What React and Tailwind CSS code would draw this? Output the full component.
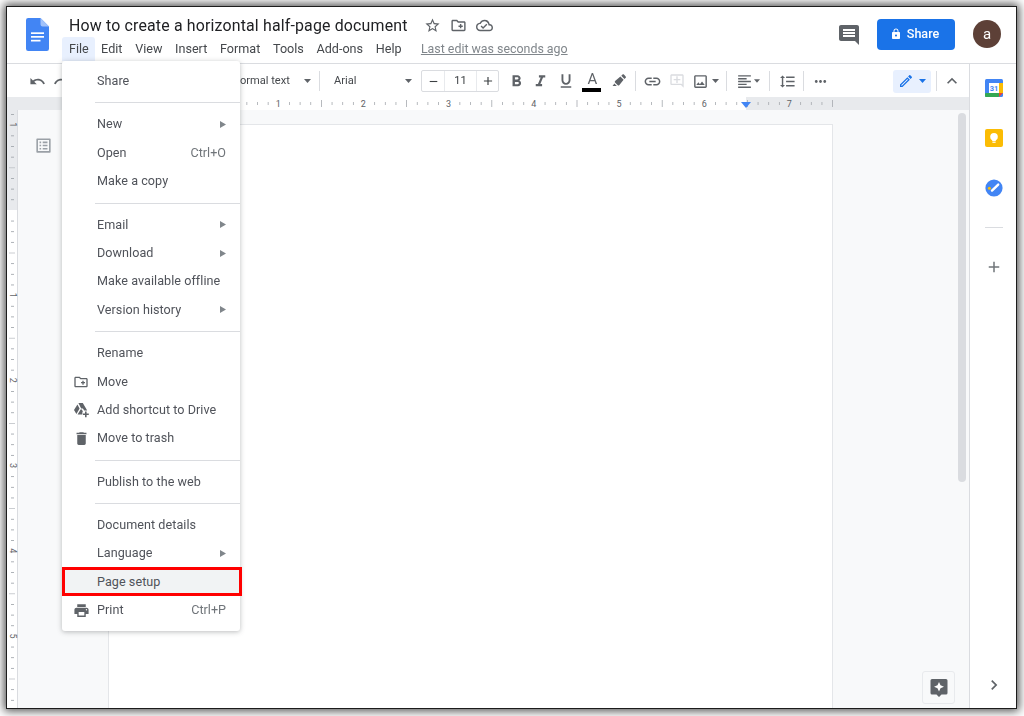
import React from "react";
import {
  MdUndo, MdRedo, MdStarBorder, MdOutlineCreateNewFolder, MdOutlineCloudDone, MdLock, MdFormatBold, MdFormatItalic,
  MdFormatUnderlined, MdLink, MdOutlineAddComment, MdOutlineImage, MdFormatAlignLeft, MdFormatLineSpacing,
  MdMoreHoriz, MdOutlineEdit, MdExpandLess, MdAdd, MdRemove, MdChevronRight, MdOutlineListAlt, MdDelete, MdPrint,
  MdInsertComment,
} from "react-icons/md";

const Sep = () => <div className="w-px h-[20px] bg-[#dadce0] shrink-0" />;

function Cell({ w, children, className = "" }) {
  return (
    <div style={{ width: w }} className={"h-full flex items-center justify-center shrink-0 text-[#5f6368] " + className}>
      {children}
    </div>
  );
}

const SubArrow = () => (
  <svg width="6" height="7" viewBox="0 0 6 7" className="mr-[14px]"><polygon points="0,0 6,3.5 0,7" fill="#80868b" /></svg>
);

function MenuItem({ label, icon, arrow, shortcut, active }) {
  return (
    <div className={"relative h-[28.4px] flex items-center text-[12.6px] text-[#50535a] " + (active ? "bg-[#f1f3f4]" : "")}>
      <div className="w-[35px] pl-[11px] flex justify-start text-[#5f6368]">{icon}</div>
      <div className="flex-1 tracking-[0.05px] pt-[0.5px]">{label}</div>
      {shortcut && <div className="pr-[14px] text-[#70757a]">{shortcut}</div>}
      {arrow && <SubArrow />}
      {active && <div className="absolute left-0 top-[-0.5px] w-[180px] h-[29px] border-[3px] border-[#f00]" />}
    </div>
  );
}

const MenuSep = () => (
  <div className="h-[15px] flex items-center pl-[33px]">
    <div className="h-px w-full bg-[#dadce0]" />
  </div>
);

function HRuler() {
  const ticks = [];
  for (let i = 0; i <= 68; i++) {
    const x = 101 + i * 10.65;
    const n = i % 8;
    if (n === 0) continue;
    ticks.push(
      <rect key={i} x={x} y={n === 4 ? 3 : 5} width="0.8" height={n === 4 ? 7 : 3} fill="#a5a9ae" />
    );
  }
  const nums = [1, 2, 3, 4, 5, 6, 7];
  return (
    <svg width="962" height="13" className="block">
      <rect x="0" y="0" width="962" height="13" fill="#e8eaed" />
      <rect x="186" y="0" width="553" height="13" fill="#ffffff" />
      {ticks}
      {nums.map((n) => (
        <text key={n} x={186 + n * 85.2} y="10" fontSize="9" textAnchor="middle" fill="#5f6368" fontFamily="Roboto, sans-serif">
          {n}
        </text>
      ))}
      <polygon points="734,5 744,5 739,11" fill="#4285f4" />
    </svg>
  );
}

function VRuler() {
  const ticks = [];
  const y0 = 100;
  for (let i = -10; i <= 48; i++) {
    const y = y0 + i * 10.65;
    const n = ((i % 8) + 8) % 8;
    if (n === 0) continue;
    ticks.push(<rect key={i} x={n === 4 ? 2 : 4} y={y} width={n === 4 ? 6 : 3} height="0.8" fill={n === 4 ? "#bdc1c6" : "#9aa0a6"} />);
  }
  const nums = [[-1, "1"], [1, "1"], [2, "2"], [3, "3"], [4, "4"], [5, "5"]];
  return (
    <svg width="11" height="598" className="block shrink-0">
      <rect width="11" height="598" fill="#ffffff" />
      <rect width="11" height="100" fill="#e8eaed" />
      <rect x="10" width="1" height="598" fill="#dadce0" />
      {ticks}
      {nums.map(([n, t]) => {
        const y = y0 + n * 85.2;
        return (
          <text key={n} x="5.5" y={y + 3} fontSize="9" textAnchor="middle" fill="#5f6368" fontFamily="Roboto, sans-serif" transform={`rotate(90 5.5 ${y})`}>
            {t}
          </text>
        );
      })}
    </svg>
  );
}

const DocsLogo = () => (
  <svg width="23" height="33" viewBox="0 0 23 33" className="shrink-0">
    <path d="M2.2 0H14.5L23 8.5V30.8A2.2 2.2 0 0 1 20.8 33H2.2A2.2 2.2 0 0 1 0 30.8V2.2A2.2 2.2 0 0 1 2.2 0Z" fill="#4285f4" />
    <path d="M14.5 0L23 8.5H16.6A2.1 2.1 0 0 1 14.5 6.4Z" fill="#a1c2fa" />
    <rect x="5" y="14.3" width="13" height="1.7" fill="#fff" />
    <rect x="5" y="18" width="13" height="1.7" fill="#fff" />
    <rect x="5" y="21.8" width="9.5" height="1.7" fill="#fff" />
  </svg>
);

const Calendar = () => (
  <svg width="18" height="18" viewBox="0 0 18 18">
    <rect x="0" y="0" width="18" height="18" rx="1.5" fill="#4285f4" />
    <rect x="4" y="4" width="10" height="10" fill="#fff" />
    <rect x="14" y="4" width="4" height="10" fill="#fbbc04" />
    <rect x="0" y="14" width="14" height="4" rx="1" fill="#34a853" />
    <polygon points="14,14 18,14 14,18" fill="#ea4335" />
    <text x="9" y="12" fontSize="7.5" fontWeight="700" textAnchor="middle" fill="#4285f4" fontFamily="Roboto, sans-serif">31</text>
  </svg>
);

const Keep = () => (
  <svg width="18" height="18" viewBox="0 0 18 18">
    <rect width="18" height="18" rx="2" fill="#fbbc04" />
    <circle cx="9" cy="7.8" r="3.8" fill="#fff" />
    <rect x="7.2" y="10" width="3.6" height="2" fill="#fff" />
    <rect x="7.4" y="12.6" width="3.2" height="1.2" fill="#fff" />
  </svg>
);

const Tasks = () => (
  <svg width="18" height="18" viewBox="0 0 18 18">
    <circle cx="9" cy="9" r="8.6" fill="#4285f4" />
    <path d="M7 11.6L13.2 5.6" stroke="#fff" strokeWidth="2.4" strokeLinecap="round" />
    <circle cx="4.4" cy="9.2" r="1.5" fill="#fbbc04" />
  </svg>
);

const Highlight = () => (
  <svg width="16" height="16" viewBox="0 0 16 16" fill="#5f6368">
    <path d="M9.4 3.6L12.6 6.8L8.2 12.2C7.8 12.7 7.2 12.7 6.8 12.3L4 9.5C3.6 9.1 3.7 8.5 4.1 8.1Z" />
    <path d="M10.3 2.8L11.5 1.6C11.9 1.2 12.5 1.2 12.9 1.6L14.7 3.4C15.1 3.8 15.1 4.4 14.7 4.8L13.5 6Z" />
    <path d="M3.4 10.6L5.8 13H1.6Z" />
  </svg>
);

const DrivePlus = () => (
  <svg width="17" height="16" viewBox="0 0 17 16" fill="#5f6368">
    <path d="M5.4 1H9.8L14.2 8.6H11.2L9.9 6.4H8.2Z" />
    <path d="M4.4 2.6L6.6 6.4L3.4 12L1 8Z" />
    <path d="M7.6 7.6H8.8L10 9.7H9.4V12.4H4.6Z" />
    <path d="M12 9.4H13.6V11.4H15.8V13H13.6V15.2H12V13H10V11.4H12Z" />
  </svg>
);

const Spark = () => (
  <svg width="18" height="20" viewBox="0 0 18 20">
    <path d="M2 1H16A1.5 1.5 0 0 1 17.5 2.5V15A1.5 1.5 0 0 1 16 16.5H11.5L9 19L6.5 16.5H2A1.5 1.5 0 0 1 .5 15V2.5A1.5 1.5 0 0 1 2 1Z" fill="#5f6368" />
    <path d="M9 4L10.5 7.3L14 8.8L10.5 10.3L9 13.6L7.5 10.3L4 8.8L7.5 7.3Z" fill="#fff" />
  </svg>
);

const Caret = ({ c = "#5f6368" }) => (
  <svg width="7" height="4" viewBox="0 0 7 4"><polygon points="0,0 7,0 3.5,4" fill={c} /></svg>
);

export default function App() {
  const menuBar = ["Edit", "View", "Insert", "Format", "Tools", "Add-ons", "Help"];
  return (
    <div className="w-[1024px] h-[716px] overflow-hidden bg-white pl-[6px] pt-[6px] [font-family:Roboto,Arial,sans-serif]">
      <div className="relative w-[1011px] h-[703px] border border-[#1c1c1c] bg-white flex flex-col blur-[0.3px] shadow-[0_0_9px_2px_rgba(0,0,0,0.7)]">
        {/* Header */}
        <div className="h-[57px] shrink-0 border-b border-[#dadce0] flex pl-[19px]">
          <div className="pt-[11px]"><DocsLogo /></div>
          <div className="ml-[13px] flex-1 flex flex-col">
            <div className="h-[30px] pt-[7px] pl-[7px] flex items-center">
              <div className="text-[15.9px] text-[#202124] tracking-[0.17px] leading-[20px]">How to create a horizontal half-page document</div>
              <div className="ml-[16px] flex items-center gap-[9px] text-[#5f6368]">
                <MdStarBorder size={17} />
                <MdOutlineCreateNewFolder size={17} />
                <MdOutlineCloudDone size={17} />
              </div>
            </div>
            <div className="h-[24px] flex items-center text-[12.6px] text-[#45484c]">
              <div className="h-full flex items-center pl-[7px] pr-[6px] bg-[#e8f0fe] rounded-t-[3px]">File</div>
              {menuBar.map((m) => (
                <div key={m} className="h-full flex items-center px-[6.35px]">{m}</div>
              ))}
              <div className="ml-[13px] text-[#80868b] underline text-[12.4px]">Last edit was seconds ago</div>
            </div>
          </div>
          <div className="flex items-center h-[54px] pr-[15px]">
            <MdInsertComment size={24} className="text-[#5f6368] mt-[1px]" />
            <div className="ml-[16px] w-[78px] h-[31px] rounded-[4px] bg-[#1a73e8] text-white flex items-center justify-center gap-[5px] pr-[3px] text-[12.6px] font-medium">
              <MdLock size={12} />
              <span>Share</span>
            </div>
            <div className="ml-[18px] w-[28px] h-[28px] rounded-full bg-[#5d4037] text-white flex items-center justify-center text-[15px]">a</div>
          </div>
        </div>

        <div className="flex-1 flex min-h-0">
          <div className="relative w-[962px] shrink-0 flex flex-col">
            {/* Toolbar */}
            <div className="h-[33px] shrink-0 bg-white flex items-center pt-[1px]">
              <Cell w={18} />
              <Cell w={24}><MdUndo size={17} /></Cell>
              <Cell w={24}><MdRedo size={17} /></Cell>
              <Cell w={159} />
              <Cell w={87} className="text-[11.1px] text-[#45484c]">
                <span className="flex-1">Normal text</span>
                <span className="pr-[8px]"><Caret /></span>
              </Cell>
              <Sep />
              <Cell w={101} className="text-[11.1px] text-[#45484c]">
                <span className="flex-1 pl-[14px]">Arial</span>
                <span className="pr-[9px]"><Caret /></span>
              </Cell>
              <div className="w-[78px] h-[22px] rounded-[2px] border border-[#dadce0] flex items-center text-[#3c4043] shrink-0">
                <div className="w-[23px] h-full flex items-center justify-center border-r border-[#e8eaed]"><MdRemove size={13} /></div>
                <div className="w-[31px] h-full flex items-center justify-center text-[11px]">11</div>
                <div className="flex-1 h-full flex items-center justify-center border-l border-[#e8eaed]"><MdAdd size={14} /></div>
              </div>
              <Cell w={5} />
              <Cell w={24}><MdFormatBold size={19} /></Cell>
              <Cell w={25}><MdFormatItalic size={19} /></Cell>
              <Cell w={25}><MdFormatUnderlined size={18} /></Cell>
              <Cell w={1} />
              <Cell w={27} className="relative">
                <span className="text-[15px] leading-[15px] mt-[-3px] text-[#5f6368]">A</span>
                <span className="absolute left-[3px] top-[23px] w-[19px] h-[4px] bg-black" />
              </Cell>
              <Cell w={26}><Highlight /></Cell>
              <Cell w={3} />
              <Sep />
              <Cell w={4} />
              <Cell w={24}><MdLink size={19} /></Cell>
              <Cell w={25} className="text-[#dadce0]!"><MdOutlineAddComment size={16} /></Cell>
              <Cell w={22}><MdOutlineImage size={17} /></Cell>
              <Cell w={8}><Caret /></Cell>
              <Cell w={7} />
              <Sep />
              <Cell w={7} />
              <Cell w={20}><MdFormatAlignLeft size={17} /></Cell>
              <Cell w={6}><Caret /></Cell>
              <Cell w={9} />
              <Sep />
              <Cell w={7} />
              <Cell w={20}><MdFormatLineSpacing size={17} /></Cell>
              <Cell w={6} />
              <Sep />
              <Cell w={5} />
              <Cell w={22}><MdMoreHoriz size={17} /></Cell>
              <Cell w={62} />
              <div className="w-[38px] h-[23px] rounded-[3px] bg-[#e8f0fe] flex items-center justify-center gap-[5px] shrink-0 text-[#1a73e8]">
                <MdOutlineEdit size={16} />
                <Caret c="#1a73e8" />
              </div>
              <Cell w={5} />
              <Sep />
              <Cell w={5} />
              <Cell w={20}><MdExpandLess size={22} /></Cell>
            </div>
            {/* Horizontal ruler */}
            <div className="h-[13px] shrink-0"><HRuler /></div>
            {/* Body */}
            <div className="flex-1 flex bg-[#f8f9fa] min-h-0 overflow-hidden">
              <VRuler />
              <div className="w-[90px] shrink-0 pl-[16px] pt-[26px] text-[#9aa0a6]">
                <MdOutlineListAlt size={19} />
              </div>
              <div className="w-[725px] shrink-0 mt-[14px] bg-white border-x border-t border-[#e4e6e9]" />
            </div>
            {/* Scrollbar */}
            <div className="absolute left-[951px] top-[49px] w-[8px] h-[369px] rounded-full bg-[#dadce0]" />
            {/* Explore */}
            <div className="absolute left-[915px] top-[607px] w-[33px] h-[33px] rounded-[3px] border border-[#e8eaed] bg-[#f8f9fa] flex items-center justify-center">
              <Spark />
            </div>
          </div>

          {/* Side panel */}
          <div className="flex-1 border-l border-[#dadce0] pl-[2px] flex flex-col items-center">
            <div className="mt-[15px]"><Calendar /></div>
            <div className="mt-[32px]"><Keep /></div>
            <div className="mt-[32px]"><Tasks /></div>
            <div className="mt-[30px] w-[18px] h-px bg-[#dadce0]" />
            <div className="mt-[30px] text-[#70757a]"><MdAdd size={18} /></div>
            <div className="mt-auto mb-[13px] text-[#5f6368]"><MdChevronRight size={20} /></div>
          </div>
        </div>

        {/* File menu */}
        <div className="absolute left-[55px] top-[54px] w-[178px] rounded-[3px] bg-white py-[6px] shadow-[0_1px_5px_rgba(60,64,67,0.35)]">
          <MenuItem label="Share" />
          <MenuSep />
          <MenuItem label="New" arrow />
          <MenuItem label="Open" shortcut="Ctrl+O" />
          <MenuItem label="Make a copy" />
          <MenuSep />
          <MenuItem label="Email" arrow />
          <MenuItem label="Download" arrow />
          <MenuItem label="Make available offline" />
          <MenuItem label="Version history" arrow />
          <MenuSep />
          <MenuItem label="Rename" />
          <MenuItem label="Move" icon={<MdOutlineCreateNewFolder size={16} />} />
          <MenuItem label="Add shortcut to Drive" icon={<DrivePlus />} />
          <MenuItem label="Move to trash" icon={<MdDelete size={17} />} />
          <MenuSep />
          <MenuItem label="Publish to the web" />
          <MenuSep />
          <MenuItem label="Document details" />
          <MenuItem label="Language" arrow />
          <MenuItem label="Page setup" active />
          <MenuItem label="Print" shortcut="Ctrl+P" icon={<MdPrint size={17} />} />
        </div>
      </div>
    </div>
  );
}
